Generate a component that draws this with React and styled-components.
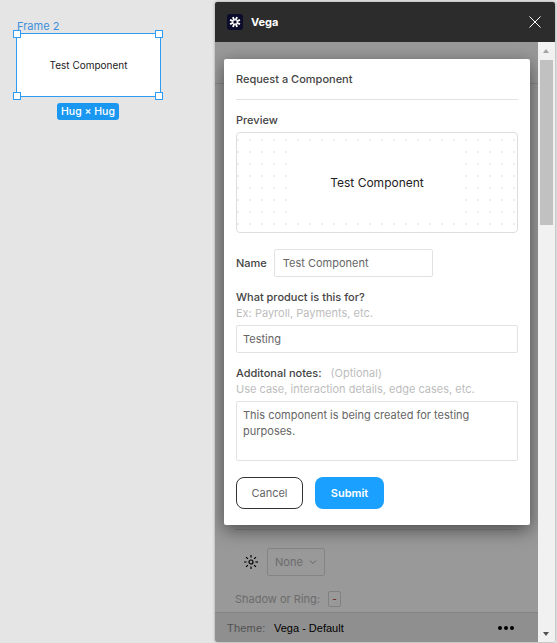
import React from "react";
import styled, { createGlobalStyle } from "styled-components";

const Global = createGlobalStyle`
  html, body { margin: 0; padding: 0; height: 643px; overflow: hidden; background: #e5e5e5; }
  * { box-sizing: border-box; }
  body { font-family: Inter, "Liberation Sans", sans-serif; font-size: 11px; }
`;

const Page = styled.div`
  display: flex; width: 557px; height: 643px; background: #e5e5e5;
`;
const Canvas = styled.div`
  width: 215px; flex: none; padding: 19px 0 0 16px; display: flex; flex-direction: column;
`;
const FrameName = styled.div`
  color: #3b8fdc; font-size: 11px; line-height: 14px; padding-left: 1px;
`;
const Frame = styled.div`
  position: relative; width: 145px; height: 64px; background: #fff; border: 1.5px solid #2e9cf2;
  display: flex; align-items: center; justify-content: center; font-size: 10px; color: #222;
`;
const Handle = styled.span`
  position: absolute; width: 8px; height: 8px; background: #fff; border: 1px solid #2e9cf2;
  ${p => (p.$top ? "top: -4px;" : "bottom: -4px;")}
  ${p => (p.$left ? "left: -4px;" : "right: -3px;")}
`;
const HugBadge = styled.div`
  align-self: flex-start; margin: 6px 0 0 41px; width: 62px; height: 17px; border-radius: 3px; background: #1a97f0;
  color: #fff; font-size: 10.5px; font-weight: 500; line-height: 17px; text-align: center;
`;

const Window = styled.div`
  width: 340px; height: 640px; margin-top: 2px; display: flex; flex-direction: column;
  border-radius: 2px; overflow: hidden; background: #fff; box-shadow: 0 0 3px rgba(0,0,0,.35);
`;
const TitleBar = styled.div`
  height: 40px; flex: none; background: #2c2c2c; display: flex; align-items: center; padding: 0 14px 0 12px; gap: 8px;
`;
const Logo = styled.svg`
  width: 16px; height: 16px; flex: none;
`;
const AppName = styled.div`
  color: #fff; font-weight: 700; font-size: 11px; flex: 1;
`;
const CloseIcon = styled.svg`
  width: 12px; height: 12px;
`;
const Body = styled.div`
  flex: 1; display: flex; min-height: 0;
`;
const Panel = styled.div`
  position: relative; flex: 1; display: flex; flex-direction: column; background: #fff;
`;
const PanelContent = styled.div`
  flex: 1; display: flex; flex-direction: column; padding-top: 41px;
`;
const PanelRule = styled.div`
  height: 1px; background: #e4e4e4;
`;
const PanelSpacer = styled.div`
  flex: 1;
`;
const PanelBottomRule = styled.div`
  height: 1px; margin: 0 20px; background: #e4e4e4;
`;
const EffectRow = styled.div`
  display: flex; align-items: center; gap: 8px; padding: 18px 0 0 28px;
`;
const SunIcon = styled.svg`
  width: 16px; height: 16px; flex: none;
`;
const FakeSelect = styled.div`
  width: 58px; height: 28px; border: 1px solid #ddd; border-radius: 2px; display: flex; align-items: center;
  gap: 6px; padding-left: 7px; color: #b4b4b4; font-size: 11px;
`;
const Chevron = styled.svg`
  width: 8px; height: 8px;
`;
const RingRow = styled.div`
  display: flex; align-items: center; gap: 8px; padding: 15px 0 5px 20px; color: #b4b4b4; font-size: 11px;
`;
const RingButton = styled.div`
  width: 13px; height: 16px; border: 1px solid #d8d8d8; border-radius: 2px; display: flex; align-items: center;
  justify-content: center; color: #a33; font-size: 10px; line-height: 1;
`;
const Footer = styled.div`
  height: 30px; flex: none; display: flex; align-items: center; padding: 0 24px 0 12px; background: #eee;
  border-top: 1px solid #ddd; font-family: "Liberation Sans", Arial, sans-serif; font-size: 11px; color: #000;
`;
const ThemeLabel = styled.span`
  color: #888; width: 47px; letter-spacing: .02em;
`;
const ThemeName = styled.span`
  flex: 1;
`;
const Dots = styled.span`
  display: flex; gap: 2px;
`;
const Dot = styled.i`
  width: 4px; height: 4px; border-radius: 50%; background: #000; display: block;
`;
const Dim = styled.div`
  position: absolute; inset: 0; background: rgba(0,0,0,.4);
`;
const Modal = styled.div`
  position: absolute; left: 9px; top: 17px; width: 306px; height: 466px; background: #fff; border-radius: 2px;
  box-shadow: 0 5px 18px rgba(0,0,0,.5); padding: 0 12px; display: flex; flex-direction: column; color: #444;
`;
const ModalTitle = styled.div`
  height: 41px; border-bottom: 1px solid #e2e2e2; padding-top: 13px; line-height: 14px; font-weight: 500; font-size: 11px;
`;
const Label = styled.div`
  font-weight: 500; font-size: 11px; line-height: 14px; color: #444;
`;
const PreviewLabel = styled(Label)`
  margin-top: 13px;
`;
const Preview = styled.div`
  margin-top: 5px; height: 101px; border: 1px solid #ddd; border-radius: 4px; display: flex; align-items: center; justify-content: center;
  background-image: radial-gradient(circle at center, #ececec 0.8px, transparent 1.2px);
  background-size: 12px 12px; background-position: -5px 1px;
`;
const PreviewItem = styled.div`
  width: 176px; height: 76px; background: #fff; display: flex; align-items: center; justify-content: center; color: #222; font-size: 12px;
`;
const NameRow = styled.div`
  display: flex; align-items: center; gap: 7px; margin-top: 16px;
`;
const Field = styled.div`
  border: 1px solid #e2e2e2; border-radius: 2px; padding: 0 ${p => p.$pad || 6}px; color: #666; font-size: 11px;
  display: flex; align-items: center; background: #fff;
  ${p => (p.$width ? `width: ${p.$width}px;` : "")} height: ${p => p.$height || 28}px;
`;
const NoteField = styled(Field)`
  align-items: flex-start; padding-top: 5px; line-height: 16px; margin-top: 5px;
`;
const Block = styled.div`
  margin-top: 13px;
`;
const Hint = styled.div`
  color: #bdbdbd; font-size: 11px; line-height: 14px; margin-top: 2px; margin-bottom: 5px;
`;
const Optional = styled.span`
  color: #bdbdbd; font-weight: 400; margin-left: 9px;
`;
const Actions = styled.div`
  display: flex; gap: 12px; margin-top: 16px;
`;
const Cancel = styled.button`
  width: 67px; height: 32px; border: 1px solid #333; border-radius: 8px; background: #fff; color: #666; font: 400 11px Inter, sans-serif;
`;
const Submit = styled.button`
  width: 69px; height: 32px; border: none; border-radius: 8px; background: #1aa0ff; color: #fff; font: 600 11px Inter, sans-serif;
`;
const Scrollbar = styled.div`
  width: 17px; flex: none; background: #f1f1f1; display: flex; flex-direction: column; align-items: center; padding-top: 18px; position: relative;
`;
const Thumb = styled.div`
  width: 13px; height: 165px; background: #c1c1c1;
`;
const Arrow = styled.div`
  position: absolute; left: 5px; width: 0; height: 0; border-left: 3.5px solid transparent; border-right: 3.5px solid transparent;
  ${p => (p.$up ? "top: 7px; border-bottom: 4px solid #a3a3a3;" : "bottom: 6px; border-top: 4px solid #505050;")}
`;

const spokes = [0, 45, 90, 135, 180, 225, 270, 315];

export default function App() {
  return (
    <Page>
      <Global />
      <Canvas>
        <FrameName>Frame 2</FrameName>
        <Frame>
          Test Component
          <Handle $top $left /><Handle $top /><Handle $left /><Handle />
        </Frame>
        <HugBadge>Hug × Hug</HugBadge>
      </Canvas>
      <Window>
        <TitleBar>
          <Logo viewBox="0 0 16 16">
            <rect width="16" height="16" rx="3" fill="#0b0b2b" />
            {spokes.map(a => (
              <line key={a} x1="8" y1="6.4" x2="8" y2="2.6" stroke="#fff" strokeWidth="1.9" transform={`rotate(${a + 22} 8 8)`} />
            ))}
          </Logo>
          <AppName>Vega</AppName>
          <CloseIcon viewBox="0 0 12 12">
            <path d="M.5.5l11 11M11.5.5l-11 11" stroke="#fff" strokeWidth="1" fill="none" />
          </CloseIcon>
        </TitleBar>
        <Body>
          <Panel>
            <PanelContent>
              <PanelRule />
              <PanelSpacer />
              <PanelBottomRule />
              <EffectRow>
                <SunIcon viewBox="0 0 16 16">
                  <circle cx="8" cy="8" r="2" fill="none" stroke="#000" strokeWidth="1.2" />
                  {spokes.map(a => (
                    <line key={a} x1="8" y1="3.6" x2="8" y2="1" stroke="#000" strokeWidth="1.2" transform={`rotate(${a} 8 8)`} />
                  ))}
                </SunIcon>
                <FakeSelect>
                  None
                  <Chevron viewBox="0 0 8 8"><path d="M1 2.5l3 3 3-3" fill="none" stroke="#aaa" strokeWidth="1" /></Chevron>
                </FakeSelect>
              </EffectRow>
              <RingRow>
                Shadow or Ring:
                <RingButton>-</RingButton>
              </RingRow>
            </PanelContent>
            <Footer>
              <ThemeLabel>Theme:</ThemeLabel>
              <ThemeName>Vega - Default</ThemeName>
              <Dots><Dot /><Dot /><Dot /></Dots>
            </Footer>
            <Dim />
            <Modal>
              <ModalTitle>Request a Component</ModalTitle>
              <PreviewLabel>Preview</PreviewLabel>
              <Preview><PreviewItem>Test Component</PreviewItem></Preview>
              <NameRow>
                <Label>Name</Label>
                <Field $width={159} $pad={8}>Test Component</Field>
              </NameRow>
              <Block>
                <Label>What product is this for?</Label>
                <Hint>Ex: Payroll, Payments, etc.</Hint>
                <Field>Testing</Field>
              </Block>
              <Block>
                <Label>Additonal notes:<Optional>(Optional)</Optional></Label>
                <Hint>Use case, interaction details, edge cases, etc.</Hint>
                <NoteField $height={60}>This component is being created for testing purposes.</NoteField>
              </Block>
              <Actions>
                <Cancel>Cancel</Cancel>
                <Submit>Submit</Submit>
              </Actions>
            </Modal>
          </Panel>
          <Scrollbar>
            <Arrow $up />
            <Thumb />
            <Arrow />
          </Scrollbar>
        </Body>
      </Window>
    </Page>
  );
}
